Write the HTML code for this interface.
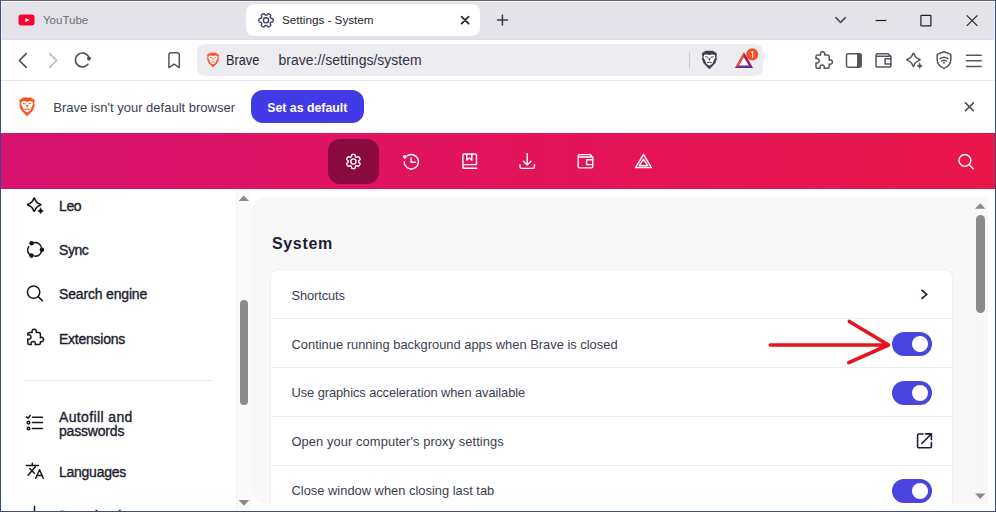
<!DOCTYPE html>
<html><head><meta charset="utf-8">
<style>
*{box-sizing:border-box;margin:0;padding:0}
html,body{width:996px;height:512px;overflow:hidden;background:#fff;font-family:"Liberation Sans",sans-serif}
.abs{position:absolute}
svg{position:absolute;overflow:visible}
#win{position:absolute;left:0;top:0;width:996px;height:512px;overflow:hidden}
#tabstrip{position:absolute;left:0;top:0;width:996px;height:40px;background:#e3e3e9;border-bottom:1px solid #dcdce2}
#tab{position:absolute;left:246px;top:4px;width:234px;height:32px;background:#fff;border-radius:8px}
#toolbar{position:absolute;left:0;top:40px;width:996px;height:41px;background:#fff;border-bottom:1px solid #e6e6ea}
#url{position:absolute;left:197px;top:44px;width:566px;height:32px;background:#ececf1;border-radius:8px}
.t{position:absolute;white-space:nowrap;line-height:1}
#infobar{position:absolute;left:0;top:81px;width:996px;height:52px;background:#fff}
#btn{position:absolute;left:251px;top:90px;width:113px;height:33px;background:#423ae6;border-radius:12px}
#header{position:absolute;left:0;top:133px;width:996px;height:56px;background:linear-gradient(90deg,#d7136e 0%,#e3135c 50%,#e9164a 100%)}
#sel{position:absolute;left:327.5px;top:139.3px;width:51.7px;height:44.3px;background:#8b0a3f;border-radius:12px}
#panel{position:absolute;left:251px;top:197px;width:722px;height:307px;background:#f8f8f9;border-radius:16px 0 0 16px;overflow:hidden}
#card{position:absolute;left:20px;top:73px;width:681px;height:300px;background:#fff;border-radius:8px;box-shadow:0 0 0 1px #efeff3}
.sep{position:absolute;left:0;width:681px;height:1px;background:#ededf0}
.sb{position:absolute;background:#fcfcfc}
.thumb{position:absolute;background:#8a8a8a;border-radius:5px}
.tog{position:absolute;left:621px;width:40px;height:24px;border-radius:12px;background:#4a45de}
.tog:after{content:"";position:absolute;left:20px;top:4px;width:16px;height:16px;border-radius:8px;background:#fff}
.side{position:absolute;left:59px;font-size:14px;color:#1b1d2e;-webkit-text-stroke:0.35px #1b1d2e}
.rowt{position:absolute;left:20.5px;font-size:12.9px;color:#3b3e50}
</style></head><body>
<div id="win">
  <div id="tabstrip"></div>
  <div id="tab"></div>
  <div class="t" style="left:43px;top:14.7px;font-size:11.5px;color:#6b6b72">YouTube</div>
  <div class="t" style="left:282px;top:13.9px;font-size:11.7px;color:#24252e">Settings - System</div>

  <div id="toolbar"></div>
  <div id="url"></div>
  <div class="t" style="left:225.7px;top:52.65px;font-size:14.4px;transform:scaleX(0.885);transform-origin:0 0;color:#24252e">Brave</div>
  <div class="t" style="left:278.5px;top:53.1px;font-size:14px;color:#2f3240">brave://settings/system</div>

  <div id="infobar"></div>
  <div class="t" style="left:53.3px;top:100.9px;font-size:13px;color:#3b3e50">Brave isn't your default browser</div>
  <div id="btn"></div>
  <div class="t" style="left:267.3px;top:102.0px;font-size:12.3px;font-weight:700;color:#fff">Set as default</div>

  <div id="header"></div>
  <div id="sel"></div>

  <!-- sidebar -->
  <div class="t side" style="top:199.45px;letter-spacing:-0.4px">Leo</div>
  <div class="t side" style="top:242.85px;letter-spacing:-0.45px">Sync</div>
  <div class="t side" style="top:286.65px;letter-spacing:-0.17px">Search engine</div>
  <div class="t side" style="top:331.75px;letter-spacing:-0.25px">Extensions</div>
  <div class="abs" style="left:25px;top:380px;width:187px;height:1px;background:#e8e8ec"></div>
  <div class="t side" style="top:409.65px;line-height:14.4px"><span style="letter-spacing:0.37px">Autofill and</span><br><span style="letter-spacing:-0.19px">passwords</span></div>
  <div class="t side" style="top:465.45px;letter-spacing:-0.26px">Languages</div>
  <div class="t side" style="top:508.6px">Downloads</div>

  <div class="sb" style="left:236px;top:189px;width:15px;height:321px;background:#fafafa;border-left:1px solid #f5f5f5"></div>
  <div class="thumb" style="left:239.5px;top:300px;width:8.8px;height:105px;border-radius:4.4px"></div>

  <div id="panel">
    <div class="t" style="left:21px;top:39px;font-size:16px;letter-spacing:0.65px;font-weight:700;color:#1d2033">System</div>
    <div id="card">
      <div class="sep" style="top:48.2px"></div>
      <div class="sep" style="top:97.1px"></div>
      <div class="sep" style="top:146.0px"></div>
      <div class="sep" style="top:194.9px"></div>
      <div class="t rowt" style="top:19.75px;letter-spacing:-0.12px">Shortcuts</div>
      <div class="t rowt" style="top:68.55px">Continue running background apps when Brave is closed</div>
      <div class="tog" style="top:62.2px"></div>
      <div class="t rowt" style="top:117.3px;letter-spacing:-0.09px">Use graphics acceleration when available</div>
      <div class="tog" style="top:111.2px"></div>
      <div class="t rowt" style="top:166.0px;letter-spacing:0.08px">Open your computer's proxy settings</div>
      <div class="t rowt" style="top:214.85px">Close window when closing last tab</div>
      <div class="tog" style="top:209.0px"></div>
    </div>
  </div>
  <div class="sb" style="left:973px;top:197px;width:15px;height:307px;background:#f7f7f7"></div>
  <div class="thumb" style="left:976px;top:215px;width:9px;height:98px;border-radius:5px"></div>

<svg id="ic" width="996" height="512" viewBox="0 0 996 512" style="left:0;top:0" fill="none" stroke-linecap="round" stroke-linejoin="round">
  <!-- youtube -->
  <rect x="18.5" y="14.5" width="16" height="11" rx="3" fill="#ff0033"/>
  <path d="M25.4,18 L29.5,20.1 L25.4,22.2Z" fill="#fff"/>
  <!-- tab gear -->
  <path d="M273.10,20.30 L273.10,20.49 L273.09,20.67 L273.08,20.86 L273.06,21.04 L273.03,21.23 L272.99,21.41 L272.93,21.58 L272.84,21.75 L272.69,21.91 L272.44,22.03 L272.09,22.10 L271.69,22.15 L271.35,22.19 L271.10,22.26 L270.93,22.34 L270.81,22.44 L270.72,22.55 L270.64,22.67 L270.57,22.78 L270.50,22.90 L270.44,23.02 L270.37,23.14 L270.31,23.26 L270.26,23.40 L270.23,23.55 L270.24,23.74 L270.31,23.98 L270.45,24.31 L270.61,24.67 L270.72,25.02 L270.73,25.29 L270.68,25.50 L270.58,25.66 L270.45,25.80 L270.31,25.92 L270.17,26.04 L270.02,26.15 L269.87,26.25 L269.71,26.35 L269.55,26.45 L269.39,26.54 L269.22,26.63 L269.06,26.71 L268.89,26.78 L268.71,26.85 L268.54,26.90 L268.35,26.94 L268.16,26.95 L267.95,26.89 L267.73,26.74 L267.48,26.48 L267.24,26.16 L267.03,25.88 L266.85,25.69 L266.70,25.59 L266.55,25.54 L266.41,25.52 L266.27,25.50 L266.14,25.50 L266.00,25.50 L265.86,25.50 L265.73,25.50 L265.59,25.52 L265.45,25.54 L265.30,25.59 L265.15,25.69 L264.97,25.88 L264.76,26.16 L264.52,26.48 L264.27,26.74 L264.05,26.89 L263.84,26.95 L263.65,26.94 L263.46,26.90 L263.29,26.85 L263.11,26.78 L262.94,26.71 L262.78,26.63 L262.61,26.54 L262.45,26.45 L262.29,26.35 L262.13,26.25 L261.98,26.15 L261.83,26.04 L261.69,25.92 L261.55,25.80 L261.42,25.66 L261.32,25.50 L261.27,25.29 L261.28,25.02 L261.39,24.67 L261.55,24.31 L261.69,23.98 L261.76,23.74 L261.77,23.55 L261.74,23.40 L261.69,23.26 L261.63,23.14 L261.56,23.02 L261.50,22.90 L261.43,22.78 L261.36,22.67 L261.28,22.55 L261.19,22.44 L261.07,22.34 L260.90,22.26 L260.65,22.19 L260.31,22.15 L259.91,22.10 L259.56,22.03 L259.31,21.91 L259.16,21.75 L259.07,21.58 L259.01,21.41 L258.97,21.23 L258.94,21.04 L258.92,20.86 L258.91,20.67 L258.90,20.49 L258.90,20.30 L258.90,20.11 L258.91,19.93 L258.92,19.74 L258.94,19.56 L258.97,19.37 L259.01,19.19 L259.07,19.02 L259.16,18.85 L259.31,18.69 L259.56,18.57 L259.91,18.50 L260.31,18.45 L260.65,18.41 L260.90,18.34 L261.07,18.26 L261.19,18.16 L261.28,18.05 L261.36,17.93 L261.43,17.82 L261.50,17.70 L261.56,17.58 L261.63,17.46 L261.69,17.34 L261.74,17.20 L261.77,17.05 L261.76,16.86 L261.69,16.62 L261.55,16.29 L261.39,15.93 L261.28,15.58 L261.27,15.31 L261.32,15.10 L261.42,14.94 L261.55,14.80 L261.69,14.68 L261.83,14.56 L261.98,14.45 L262.13,14.35 L262.29,14.25 L262.45,14.15 L262.61,14.06 L262.78,13.97 L262.94,13.89 L263.11,13.82 L263.29,13.75 L263.46,13.70 L263.65,13.66 L263.84,13.65 L264.05,13.71 L264.27,13.86 L264.52,14.12 L264.76,14.44 L264.97,14.72 L265.15,14.91 L265.30,15.01 L265.45,15.06 L265.59,15.08 L265.73,15.10 L265.86,15.10 L266.00,15.10 L266.14,15.10 L266.27,15.10 L266.41,15.08 L266.55,15.06 L266.70,15.01 L266.85,14.91 L267.03,14.72 L267.24,14.44 L267.48,14.12 L267.73,13.86 L267.95,13.71 L268.16,13.65 L268.35,13.66 L268.54,13.70 L268.71,13.75 L268.89,13.82 L269.06,13.89 L269.22,13.97 L269.39,14.06 L269.55,14.15 L269.71,14.25 L269.87,14.35 L270.02,14.45 L270.17,14.56 L270.31,14.68 L270.45,14.80 L270.58,14.94 L270.68,15.10 L270.73,15.31 L270.72,15.58 L270.61,15.93 L270.45,16.29 L270.31,16.62 L270.24,16.86 L270.23,17.05 L270.26,17.20 L270.31,17.34 L270.37,17.46 L270.44,17.58 L270.50,17.70 L270.57,17.82 L270.64,17.93 L270.72,18.05 L270.81,18.16 L270.93,18.26 L271.10,18.34 L271.35,18.41 L271.69,18.45 L272.09,18.50 L272.44,18.57 L272.69,18.69 L272.84,18.85 L272.93,19.02 L272.99,19.19 L273.03,19.37 L273.06,19.56 L273.08,19.74 L273.09,19.93 L273.10,20.11Z" stroke="#3a4068" stroke-width="1.4"/>
  <circle cx="266" cy="20.3" r="2.6" stroke="#3a4068" stroke-width="1.4"/>
  <!-- tab close -->
  <path d="M461.6,16.6 L468.6,23.6 M468.6,16.6 L461.6,23.6" stroke="#23242c" stroke-width="1.7"/>
  <!-- new tab plus -->
  <path d="M502.4,15.2 V25 M497.5,20.1 H507.4" stroke="#3a3b42" stroke-width="1.5"/>
  <!-- window controls -->
  <path d="M835.9,17.6 L840.6,22.3 L845.3,17.6" stroke="#55565c" stroke-width="1.8"/>
  <path d="M875.6,20.5 H886.4" stroke="#1f1f24" stroke-width="1.2" stroke-linecap="butt"/>
  <rect x="920.9" y="15.4" width="10" height="10.4" stroke="#1f1f24" stroke-width="1.2" stroke-linejoin="miter" rx="0.6"/>
  <path d="M966.8,15.3 L977.4,25.9 M977.4,15.3 L966.8,25.9" stroke="#1f1f24" stroke-width="1.1" stroke-linecap="butt"/>

  <!-- toolbar left -->
  <path d="M26.2,53.6 L19.4,60.5 L26.2,67.4" stroke="#4a4c57" stroke-width="1.6"/>
  <path d="M49.7,53.6 L56.6,60.5 L49.7,67.4" stroke="#b9babf" stroke-width="1.6"/>
  <path d="M87.9,64.3 A7,7 0 1 1 88.4,56.4" stroke="#4a4c57" stroke-width="1.6"/>
  <circle cx="89" cy="58.6" r="2" fill="#4a4c57"/>
  <path d="M168.9,67.6 V54.8 Q168.9,52.7 171,52.7 H177.2 Q179.3,52.7 179.3,54.8 V67.6 L174.1,64.2 Z" stroke="#55565e" stroke-width="1.5"/>

  <!-- url bar brave lion -->
  <g transform="translate(213,60.1) scale(0.79)">
    <path d="M-3.6,-9 H3.6 L7.3,-6.6 L6.7,-3.2 L7.3,-1.6 L5.6,3.2 L0,8.9 L-5.6,3.2 L-7.3,-1.6 L-6.7,-3.2 L-7.3,-6.6 Z" fill="#fb542b" stroke="#fb542b" stroke-width="0.5" stroke-linejoin="round"/>
    <path d="M-5.2,-5.3 L-2.4,-5.7 L0,-5.1 L2.4,-5.7 L5.2,-5.3 L6,-2.6 L4.5,0.2 L3,3.6 L0,5.6 L-3,3.6 L-4.5,0.2 L-6,-2.6 Z" fill="#fff"/>
    <path d="M-3.7,-3.3 L-1.5,-2.9 M1.5,-2.9 L3.7,-3.3 M-2.1,2.6 Q0,1.6 2.1,2.6" stroke="#fb542b" stroke-width="1"/>
    <path d="M-1.3,-1.9 H1.3 L0,1.2 Z" fill="#fb542b"/>
  </g>
  <!-- separator -->
  <path d="M689.5,52.5 V68" stroke="#c9c9cf" stroke-width="1"/>
  <!-- dark shield lion -->
  <g transform="translate(709.4,60.1) scale(1.0)">
    <path d="M-3.6,-9 H3.6 L7.3,-6.6 L6.7,-3.2 L7.3,-1.6 L5.6,3.2 L0,8.9 L-5.6,3.2 L-7.3,-1.6 L-6.7,-3.2 L-7.3,-6.6 Z" fill="#3b3d4e" stroke="#3b3d4e" stroke-width="0.5" stroke-linejoin="round"/>
    <path d="M-5.2,-5.3 L-2.4,-5.7 L0,-5.1 L2.4,-5.7 L5.2,-5.3 L6,-2.6 L4.5,0.2 L3,3.6 L0,5.6 L-3,3.6 L-4.5,0.2 L-6,-2.6 Z" fill="#fff"/>
    <path d="M-3.7,-3.3 L-1.5,-2.9 M1.5,-2.9 L3.7,-3.3 M-2.1,2.6 Q0,1.6 2.1,2.6" stroke="#3b3d4e" stroke-width="1"/>
    <path d="M-1.3,-1.9 H1.3 L0,1.2 Z" fill="#3b3d4e"/>
  </g>
  <!-- BAT -->
  <path d="M743.9,52.4 L734.9,67.9 H752.9 Z" fill="#662d91"/>
  <path d="M743.9,52.4 L734.9,67.9 L739,65.6 L743.9,57.2 Z" fill="#ff4724"/>
  <path d="M743.9,52.4 L752.9,67.9 L748.8,65.6 L743.9,57.2 Z" fill="#9e1f63"/>
  <path d="M743.9,57.2 L739,65.6 H748.8 Z" fill="#fff"/>
  <circle cx="752.2" cy="54.4" r="6.1" fill="#f4502a"/>
  <path d="M752.7,51.3 V57.6 M752.7,51.4 L751.1,52.6" stroke="#fff" stroke-width="1.1" stroke-linecap="butt" stroke-linejoin="miter"/>

  <!-- toolbar right -->
  <path d="M816.00,56.50 Q816.00,55.00 817.50,55.00 H820.65 A2.2,2.2 0 1 1 824.55,55.00 H827.70 Q829.20,55.00 829.20,56.50 V60.15 A2.2,2.2 0 1 1 829.20,64.05 V66.70 Q829.20,68.20 827.70,68.20 H824.15 A2.2,2.2 0 1 0 820.25,68.20 H817.50 Q816.00,68.20 816.00,66.70 V62.65 A2.2,2.2 0 1 0 816.00,58.75 Z" stroke="#55565e" stroke-width="1.5"/>
  <rect x="846.5" y="53.8" width="14.7" height="13.4" rx="1.6" stroke="#55565e" stroke-width="1.5"/>
  <rect x="857" y="53.8" width="4.2" height="13.4" fill="#55565e"/>
  <path d="M876,55.5 Q876,53.8 877.7,53.8 H888 L890.9,56.6 V65.2 Q890.9,67 889.2,67 H877.7 Q876,67 876,65.2 Z M876.3,56.3 H890.6" stroke="#55565e" stroke-width="1.5"/>
  <path d="M891,58.8 H885.1 V63.9 H891" stroke="#55565e" stroke-width="1.5"/>
  <path d="M913.95,53.80 C914.90,56.90 916.30,58.30 919.40,59.25 Q920.70,59.80 919.40,60.35 C916.30,61.30 914.90,62.70 913.95,65.80 Q913.40,67.10 912.85,65.80 C911.90,62.70 910.50,61.30 907.40,60.35 Q906.10,59.80 907.40,59.25 C910.50,58.30 911.90,56.90 912.85,53.80 Q913.40,52.50 913.95,53.80Z" stroke="#55565e" stroke-width="1.5"/>
  <path d="M919.70,63.20 Q920.06,65.54 922.40,65.90 Q920.06,66.26 919.70,68.60 Q919.34,66.26 917.00,65.90 Q919.34,65.54 919.70,63.20Z" fill="#55565e" stroke="#55565e" stroke-width="0.6"/>
  <path d="M944,51.8 L950.8,54.4 V59.8 Q950.8,65.5 944,68.4 Q937.2,65.5 937.2,59.8 V54.4 Z" stroke="#55565e" stroke-width="1.5"/>
  <path d="M940.1,58.6 Q944,55.8 947.9,58.6 M941.6,61 Q944,59.4 946.4,61" stroke="#55565e" stroke-width="1.5"/>
  <circle cx="944" cy="62.8" r="1" fill="#55565e"/>
  <path d="M966.5,55.2 H981.2 M966.5,60.8 H981.2 M966.5,66.5 H981.2" stroke="#55565e" stroke-width="1.5"/>

  <!-- infobar lion -->
  <g transform="translate(27.1,106.9) scale(1.02)">
    <path d="M-3.6,-9 H3.6 L7.3,-6.6 L6.7,-3.2 L7.3,-1.6 L5.6,3.2 L0,8.9 L-5.6,3.2 L-7.3,-1.6 L-6.7,-3.2 L-7.3,-6.6 Z" fill="#fb4f1e" stroke="#fb4f1e" stroke-width="0.5" stroke-linejoin="round"/>
    <path d="M-5.2,-5.3 L-2.4,-5.7 L0,-5.1 L2.4,-5.7 L5.2,-5.3 L6,-2.6 L4.5,0.2 L3,3.6 L0,5.6 L-3,3.6 L-4.5,0.2 L-6,-2.6 Z" fill="#fff"/>
    <path d="M-3.7,-3.3 L-1.5,-2.9 M1.5,-2.9 L3.7,-3.3 M-2.1,2.6 Q0,1.6 2.1,2.6" stroke="#fb4f1e" stroke-width="1"/>
    <path d="M-1.3,-1.9 H1.3 L0,1.2 Z" fill="#fb4f1e"/>
  </g>
  <path d="M965.5,102.9 L973.4,110.8 M973.4,102.9 L965.5,110.8" stroke="#4a4b53" stroke-width="1.6"/>

  <!-- header icons -->
  <g stroke="#fff" stroke-width="1.4">
    <path d="M358.60,161.50 L358.60,161.64 L358.60,161.77 L358.62,161.91 L358.64,162.05 L358.69,162.20 L358.79,162.35 L358.98,162.53 L359.26,162.74 L359.58,162.98 L359.84,163.23 L359.99,163.45 L360.05,163.66 L360.04,163.85 L360.00,164.04 L359.95,164.21 L359.88,164.39 L359.81,164.56 L359.73,164.72 L359.64,164.89 L359.55,165.05 L359.45,165.21 L359.35,165.37 L359.25,165.52 L359.14,165.67 L359.02,165.81 L358.90,165.95 L358.76,166.08 L358.60,166.18 L358.39,166.23 L358.12,166.22 L357.77,166.11 L357.41,165.95 L357.08,165.81 L356.84,165.74 L356.65,165.73 L356.50,165.76 L356.36,165.81 L356.24,165.87 L356.12,165.94 L356.00,166.00 L355.88,166.07 L355.77,166.14 L355.65,166.22 L355.54,166.31 L355.44,166.43 L355.36,166.60 L355.29,166.85 L355.25,167.19 L355.20,167.59 L355.13,167.94 L355.01,168.19 L354.85,168.34 L354.68,168.43 L354.51,168.49 L354.33,168.53 L354.14,168.56 L353.96,168.58 L353.77,168.59 L353.59,168.60 L353.40,168.60 L353.21,168.60 L353.03,168.59 L352.84,168.58 L352.66,168.56 L352.47,168.53 L352.29,168.49 L352.12,168.43 L351.95,168.34 L351.79,168.19 L351.67,167.94 L351.60,167.59 L351.55,167.19 L351.51,166.85 L351.44,166.60 L351.36,166.43 L351.26,166.31 L351.15,166.22 L351.03,166.14 L350.92,166.07 L350.80,166.00 L350.68,165.94 L350.56,165.87 L350.44,165.81 L350.30,165.76 L350.15,165.73 L349.96,165.74 L349.72,165.81 L349.39,165.95 L349.03,166.11 L348.68,166.22 L348.41,166.23 L348.20,166.18 L348.04,166.08 L347.90,165.95 L347.78,165.81 L347.66,165.67 L347.55,165.52 L347.45,165.37 L347.35,165.21 L347.25,165.05 L347.16,164.89 L347.07,164.72 L346.99,164.56 L346.92,164.39 L346.85,164.21 L346.80,164.04 L346.76,163.85 L346.75,163.66 L346.81,163.45 L346.96,163.23 L347.22,162.98 L347.54,162.74 L347.82,162.53 L348.01,162.35 L348.11,162.20 L348.16,162.05 L348.18,161.91 L348.20,161.77 L348.20,161.64 L348.20,161.50 L348.20,161.36 L348.20,161.23 L348.18,161.09 L348.16,160.95 L348.11,160.80 L348.01,160.65 L347.82,160.47 L347.54,160.26 L347.22,160.02 L346.96,159.77 L346.81,159.55 L346.75,159.34 L346.76,159.15 L346.80,158.96 L346.85,158.79 L346.92,158.61 L346.99,158.44 L347.07,158.28 L347.16,158.11 L347.25,157.95 L347.35,157.79 L347.45,157.63 L347.55,157.48 L347.66,157.33 L347.78,157.19 L347.90,157.05 L348.04,156.92 L348.20,156.82 L348.41,156.77 L348.68,156.78 L349.03,156.89 L349.39,157.05 L349.72,157.19 L349.96,157.26 L350.15,157.27 L350.30,157.24 L350.44,157.19 L350.56,157.13 L350.68,157.06 L350.80,157.00 L350.92,156.93 L351.03,156.86 L351.15,156.78 L351.26,156.69 L351.36,156.57 L351.44,156.40 L351.51,156.15 L351.55,155.81 L351.60,155.41 L351.67,155.06 L351.79,154.81 L351.95,154.66 L352.12,154.57 L352.29,154.51 L352.47,154.47 L352.66,154.44 L352.84,154.42 L353.03,154.41 L353.21,154.40 L353.40,154.40 L353.59,154.40 L353.77,154.41 L353.96,154.42 L354.14,154.44 L354.33,154.47 L354.51,154.51 L354.68,154.57 L354.85,154.66 L355.01,154.81 L355.13,155.06 L355.20,155.41 L355.25,155.81 L355.29,156.15 L355.36,156.40 L355.44,156.57 L355.54,156.69 L355.65,156.78 L355.77,156.86 L355.88,156.93 L356.00,157.00 L356.12,157.06 L356.24,157.13 L356.36,157.19 L356.50,157.24 L356.65,157.27 L356.84,157.26 L357.08,157.19 L357.41,157.05 L357.77,156.89 L358.12,156.78 L358.39,156.77 L358.60,156.82 L358.76,156.92 L358.90,157.05 L359.02,157.19 L359.14,157.33 L359.25,157.48 L359.35,157.63 L359.45,157.79 L359.55,157.95 L359.64,158.11 L359.73,158.28 L359.81,158.44 L359.88,158.61 L359.95,158.79 L360.00,158.96 L360.04,159.15 L360.05,159.34 L359.99,159.55 L359.84,159.77 L359.58,160.02 L359.26,160.26 L358.98,160.47 L358.79,160.65 L358.69,160.80 L358.64,160.95 L358.62,161.09 L358.60,161.23 L358.60,161.36Z"/>
    <circle cx="353.4" cy="161.5" r="2.6"/>
    <path d="M404.1,161.8 A7.2,7.2 0 1 0 407.6,155.6"/>
    <circle cx="404.9" cy="156.8" r="1.9" fill="#fff" stroke="none"/>
    <path d="M411.1,158 V162.2 H415.4"/>
    <path d="M462.9,168.2 V155.6 Q462.9,154 464.5,154 H474.9 Q476.5,154 476.5,155.6 V164.6 H464.9 Q462.9,164.6 462.9,166.4 Q462.9,168.2 464.9,168.2 H476.7 M466.8,154.2 V160.2 L469.3,157.9 L471.8,160.2 V154.2"/>
    <path d="M527.2,153.6 V165 M523.4,161.3 L527.2,165 L531,161.3 M520,164.8 V167 Q520,168.4 521.4,168.4 H533 Q534.4,168.4 534.4,167 V164.8"/>
    <path d="M578.2,156 Q578.2,154.6 579.6,154.6 H590 L592.8,157.3 V166.5 Q592.8,167.9 591.4,167.9 H579.6 Q578.2,167.9 578.2,166.5 Z M578.5,157 H592.5 M592.8,159.8 H586.6 V164.6 H592.8"/>
    <path d="M643.5,154.4 L635.6,167.6 H651.4 Z"/>
    <path d="M643.5,159.2 L639.1,165.8 H647.9 Z"/>
    <circle cx="964.9" cy="160.4" r="5.9"/>
    <path d="M969.3,164.8 L973.2,168.7"/>
  </g>

  <!-- sidebar icons -->
  <g stroke="#16171f" stroke-width="1.5">
    <path d="M34.75,198.70 C35.70,201.80 37.10,203.20 40.20,204.15 Q41.50,204.70 40.20,205.25 C37.10,206.20 35.70,207.60 34.75,210.70 Q34.20,212.00 33.65,210.70 C32.70,207.60 31.30,206.20 28.20,205.25 Q26.90,204.70 28.20,204.15 C31.30,203.20 32.70,201.80 33.65,198.70 Q34.20,197.40 34.75,198.70Z" stroke-width="1.6"/>
    <path d="M40.60,208.10 Q40.96,210.54 43.40,210.90 Q40.96,211.26 40.60,213.70 Q40.24,211.26 37.80,210.90 Q40.24,210.54 40.60,208.10Z" fill="#16171f" stroke-width="0.7"/>
    <path d="M33,243 A6.6,6.6 0 0 1 41.7,248.6 M41.4,251.8 A6.6,6.6 0 0 1 34.6,256.1 M29.9,254.8 A6.6,6.6 0 0 1 28.7,246.6"/>
    <circle cx="31.6" cy="243.3" r="2.3" fill="#16171f" stroke="none"/>
    <circle cx="41.9" cy="249.8" r="2.3" fill="#16171f" stroke="none"/>
    <circle cx="31.5" cy="255.6" r="2.3" fill="#16171f" stroke="none"/>
    <circle cx="33.6" cy="292.1" r="6.2"/>
    <path d="M38.4,296.9 L42.4,300.6"/>
    <path d="M27.80,333.90 Q27.80,332.40 29.30,332.40 H32.25 A2.2,2.2 0 1 1 36.15,332.40 H38.90 Q40.40,332.40 40.40,333.90 V337.65 A2.2,2.2 0 1 1 40.40,341.55 V343.10 Q40.40,344.60 38.90,344.60 H35.15 A2.2,2.2 0 1 0 31.25,344.60 H29.30 Q27.80,344.60 27.80,343.10 V338.95 A2.2,2.2 0 1 0 27.80,335.05 Z"/>
    <path d="M26.7,416.9 L28,418.3 L30.3,415.6 M32.5,417.3 H42.5 M32.5,422.6 H42.5 M32.5,428.5 H42.5"/>
    <circle cx="28.5" cy="422.6" r="1.3"/>
    <circle cx="28.5" cy="428.5" r="1.3"/>
    <path d="M26.2,465.5 H38.5 M32.3,463.2 V465.5 M35.4,466.7 L28.1,475.3 M29.8,468.5 L34.3,473.2 M35.7,478.2 L39.6,469.7 L43.3,478.2 M36.8,475.6 H42.2"/>
    <path d="M34.5,506.5 V512"/>
  </g>

  <!-- chevron / external -->
  <path d="M922,290.3 L926.8,294.4 L922,298.4" stroke="#1d1f36" stroke-width="1.7"/>
  <path d="M923,434 H918.6 Q917.6,434 917.6,435 V446.8 Q917.6,447.8 918.6,447.8 H930.4 Q931.4,447.8 931.4,446.8 V442.5 M925.5,433.9 H931.4 V439.8 M931,434.3 L921.8,443.5" stroke="#1d1f36" stroke-width="1.6"/>

  <!-- scroll arrows -->
  <path d="M238.7,201 L243.8,195.5 L249,201Z" fill="#8a8a8a"/>
  <path d="M238.6,500 L243.9,505.7 L249.2,500Z" fill="#8a8a8a"/>
  <path d="M975,208.8 L980.2,203.3 L985.4,208.8Z" fill="#8a8a8a"/>
  <path d="M975,493.5 L980.2,499 L985.4,493.5Z" fill="#8a8a8a"/>

  <!-- red arrow -->
  <path d="M770.3,345 H888.5 M849.3,321.5 L888.5,345 L848.8,362.7" stroke="#e8131b" stroke-width="3.6"/>
</svg>

  <!-- borders -->
  <div class="abs" style="left:1px;top:1px;width:994px;height:1px;background:#f4f4f7"></div>
  <div class="abs" style="left:1px;top:1px;width:1px;height:39px;background:#f4f4f7"></div>
  <div class="abs" style="left:994px;top:1px;width:1px;height:39px;background:#f4f4f7"></div>
  <div class="abs" style="left:0;top:0;width:996px;height:1px;background:#656568"></div>
  <div class="abs" style="left:0;top:0;width:1px;height:512px;background:#3b4c82"></div>
  <div class="abs" style="left:995px;top:0;width:1px;height:512px;background:#3b4c82"></div>
  <div class="abs" style="left:0;top:511px;width:996px;height:1px;background:#3b4c82"></div>
</div>
</body></html>
